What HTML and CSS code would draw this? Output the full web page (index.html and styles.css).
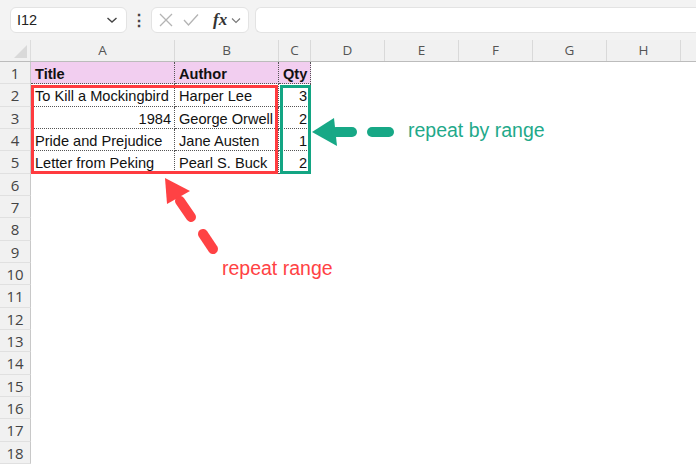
FILE: index.html
```html
<!DOCTYPE html>
<html lang="en">
<head>
  <meta charset="UTF-8">
  <title>Repeat range</title>
  <link rel="stylesheet" href="styles.css">
</head>
<body>
  <div class="page">
    <!-- Formula bar -->
    <div class="toolbar">
      <div class="name-box">
        <span>I12</span>
        <svg class="chev" width="12" height="8" viewBox="0 0 12 8"><path d="M1.5 2 L6 6 L10.5 2" fill="none" stroke="#444" stroke-width="1.4"/></svg>
      </div>
      <div class="kebab">⋮</div>
      <div class="fx-box">
        <svg width="14" height="14" viewBox="0 0 14 14"><path d="M1 1 L13 13 M13 1 L1 13" stroke="#b4b4b4" stroke-width="1.3"/></svg>
        <svg width="16" height="14" viewBox="0 0 16 14"><path d="M1 7 L5.5 12 L15 1.5" fill="none" stroke="#b4b4b4" stroke-width="1.3"/></svg>
        <span class="fx">fx</span>
        <svg width="10" height="7" viewBox="0 0 10 7"><path d="M1 1.5 L5 5.5 L9 1.5" fill="none" stroke="#777" stroke-width="1.1"/></svg>
      </div>
      <div class="formula"></div>
    </div>

    <!-- Grid -->
    <div class="sheet">
      <div class="col-heads">
        <div class="corner"></div>
        <div class="ch a">A</div>
        <div class="ch b">B</div>
        <div class="ch c">C</div>
        <div class="ch wide">D</div>
        <div class="ch wide">E</div>
        <div class="ch wide">F</div>
        <div class="ch wide">G</div>
        <div class="ch wide">H</div>
        <div class="ch rest"></div>
      </div>

      <div class="row">
        <div class="rh">1</div>
        <div class="cell a head">Title</div>
        <div class="cell b head">Author</div>
        <div class="cell c head">Qty</div>
      </div>
      <div class="row">
        <div class="rh">2</div>
        <div class="cell a">To Kill a Mockingbird</div>
        <div class="cell b">Harper Lee</div>
        <div class="cell c num">3</div>
      </div>
      <div class="row">
        <div class="rh">3</div>
        <div class="cell a num">1984</div>
        <div class="cell b">George Orwell</div>
        <div class="cell c num">2</div>
      </div>
      <div class="row">
        <div class="rh">4</div>
        <div class="cell a">Pride and Prejudice</div>
        <div class="cell b">Jane Austen</div>
        <div class="cell c num">1</div>
      </div>
      <div class="row">
        <div class="rh">5</div>
        <div class="cell a">Letter from Peking</div>
        <div class="cell b">Pearl S. Buck</div>
        <div class="cell c num">2</div>
      </div>
      <div class="row"><div class="rh">6</div></div>
      <div class="row"><div class="rh">7</div></div>
      <div class="row"><div class="rh">8</div></div>
      <div class="row"><div class="rh">9</div></div>
      <div class="row"><div class="rh">10</div></div>
      <div class="row"><div class="rh">11</div></div>
      <div class="row"><div class="rh">12</div></div>
      <div class="row"><div class="rh">13</div></div>
      <div class="row"><div class="rh">14</div></div>
      <div class="row"><div class="rh">15</div></div>
      <div class="row"><div class="rh">16</div></div>
      <div class="row"><div class="rh">17</div></div>
      <div class="row"><div class="rh">18</div></div>
    </div>

    <!-- Annotations -->
    <div class="box-red"></div>
    <div class="box-teal"></div>
    <svg class="arrows" width="696" height="464" viewBox="0 0 696 464">
      <g fill="#17a886" stroke="#17a886" stroke-width="10" stroke-linecap="round">
        <polygon points="312,132 334,118 337,146" stroke="none"/>
        <line x1="336" y1="132" x2="352" y2="132"/>
        <line x1="372" y1="132" x2="389" y2="132"/>
      </g>
      <g fill="#ff4244" stroke="#ff4244" stroke-width="10" stroke-linecap="round">
        <polygon points="165,178 190,191 167,204" stroke="none"/>
        <line x1="180" y1="201" x2="191" y2="217"/>
        <line x1="203" y1="234" x2="213" y2="249"/>
      </g>
    </svg>
    <div class="label label-teal">repeat by range</div>
    <div class="label label-red">repeat range</div>
  </div>
</body>
</html>
```

FILE: styles.css
```css
* {
  margin: 0;
  padding: 0;
  box-sizing: border-box;
}

body {
  background-color: #ffffff;
  font-family: 'Liberation Sans', Arial, sans-serif;
}

.page {
  position: relative;
  width: 696px;
  height: 464px;
  overflow: hidden;
  background-color: #ffffff;
}

/* Formula bar */
.toolbar {
  height: 40px;
  background-color: #f3f3f3;
  display: flex;
  align-items: center;
  padding: 0 0 0 10px;
}

.name-box {
  width: 117px;
  height: 26px;
  background-color: #ffffff;
  border: 1px solid #e3e3e3;
  border-radius: 6px;
  display: flex;
  align-items: center;
  justify-content: space-between;
  padding: 0 8px 0 6px;
  font-size: 14.5px;
  color: #222;
}

.kebab {
  width: 24px;
  text-align: center;
  font-size: 16px;
  font-weight: bold;
  color: #444;
}

.fx-box {
  width: 98px;
  height: 26px;
  background-color: #ffffff;
  border: 1px solid #e3e3e3;
  border-radius: 6px;
  display: flex;
  align-items: center;
  gap: 10px;
  padding: 0 0 0 7px;
}

.fx {
  font-family: 'Liberation Serif', 'Times New Roman', serif;
  font-style: italic;
  font-weight: bold;
  font-size: 17px;
  color: #333;
  margin-left: 4px;
  margin-right: -6px;
}

.formula {
  flex: 1;
  height: 26px;
  margin-left: 6px;
  background-color: #ffffff;
  border: 1px solid #e3e3e3;
  border-right: none;
  border-radius: 6px 0 0 6px;
}

/* Sheet */
.col-heads {
  display: flex;
  height: 22px;
  background-color: #f1f1f1;
  border-bottom: 1px solid #bcbcbc;
}

.corner {
  width: 31px;
  position: relative;
  border-right: 1px solid #dcdcdc;
}

.corner::after {
  content: "";
  position: absolute;
  right: 3px;
  bottom: 3px;
  width: 0;
  height: 0;
  border-left: 13px solid transparent;
  border-bottom: 13px solid #d9d9d9;
}

.ch {
  text-align: center;
  font-family: 'Open Sans', 'Liberation Sans', sans-serif;
  font-size: 13.5px;
  line-height: 21px;
  color: #555;
  border-right: 1px solid #d9d9d9;
}

.a { width: 144px; }
.b { width: 104px; }
.c { width: 32px; }
.wide { width: 74px; }
.rest { flex: 1; border-right: none; }

.row {
  display: flex;
  height: 22.33px;
}

.rh {
  width: 31px;
  background-color: #f1f1f1;
  border-right: 1px solid #c8c8c8;
  border-bottom: 1px solid #e0e0e0;
  text-align: center;
  font-family: 'Open Sans', 'Liberation Sans', sans-serif;
  font-size: 15px;
  line-height: 22px;
  color: #444;
}

.cell {
  font-size: 14.6px;
  line-height: 22px;
  padding: 1px 4px 0 4px;
  color: #111;
  white-space: nowrap;
  border-right: 1px dotted #555;
  border-bottom: 1px dotted #555;
}

.cell.head {
  background-color: #f2cef0;
  font-weight: bold;
}

.cell.num {
  text-align: right;
  padding-right: 3px;
}

/* Annotations */
.box-red {
  position: absolute;
  left: 31px;
  top: 85px;
  width: 247px;
  height: 89px;
  border: 3px solid #ff3b3f;
}

.box-teal {
  position: absolute;
  left: 280px;
  top: 85px;
  width: 31px;
  height: 89px;
  border: 3px solid #13a583;
}

.arrows {
  position: absolute;
  left: 0;
  top: 0;
  pointer-events: none;
}

.label {
  position: absolute;
  font-size: 19.5px;
  line-height: 20px;
  white-space: nowrap;
}

.label-teal {
  left: 408px;
  top: 120px;
  color: #1fa98a;
}

.label-red {
  left: 222px;
  top: 258px;
  color: #ff4244;
}
```
